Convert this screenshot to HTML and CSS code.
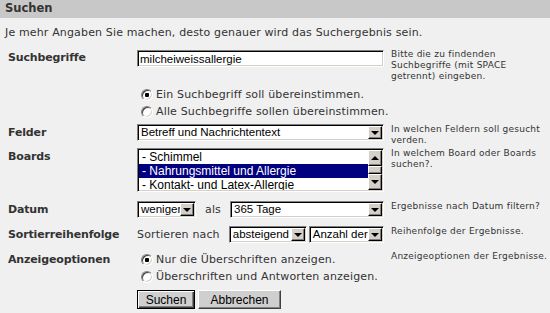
FILE: index.html
```html
<!DOCTYPE html>
<html lang="de">
  <head>
    <meta charset="UTF-8" />
    <title>Suchen</title>
    <link rel="stylesheet" href="styles.css">
  </head>
  <body>
    <div class="panel">
      <div class="panel-head">Suchen</div>
      <p class="intro">Je mehr Angaben Sie machen, desto genauer wird das Suchergebnis sein.</p>

      <div class="row row-terms">
        <div class="label">Suchbegriffe</div>
        <div class="field">
          <input type="text" class="text-input" value="milcheiweissallergie" />
        </div>
        <div class="help">Bitte die zu findenden Suchbegriffe (mit SPACE getrennt) eingeben.</div>
      </div>

      <div class="row row-tight">
        <div class="label"></div>
        <div class="field">
          <label class="radio"><input type="radio" name="match" checked />Ein Suchbegriff soll übereinstimmen.</label>
          <label class="radio"><input type="radio" name="match" />Alle Suchbegriffe sollen übereinstimmen.</label>
        </div>
        <div class="help"></div>
      </div>

      <div class="row row-tight">
        <div class="label">Felder</div>
        <div class="field">
          <div class="select">
            <span class="select-text">Betreff und Nachrichtentext</span>
            <span class="select-arrow"></span>
          </div>
        </div>
        <div class="help">In welchen Feldern soll gesucht verden.</div>
      </div>

      <div class="row row-boards">
        <div class="label">Boards</div>
        <div class="field">
          <div class="listbox">
            <div class="listbox-items">
              <div class="list-item">- Schimmel</div>
              <div class="list-item selected">- Nahrungsmittel und Allergie</div>
              <div class="list-item">- Kontakt- und Latex-Allergie</div>
            </div>
            <div class="scrollbar">
              <span class="scroll-btn up"></span>
              <span class="scroll-thumb"></span>
              <span class="scroll-btn down"></span>
            </div>
          </div>
        </div>
        <div class="help">In welchem Board oder Boards suchen?.</div>
      </div>

      <div class="row row-date">
        <div class="label">Datum</div>
        <div class="field inline">
          <div class="select select-less">
            <span class="select-text">weniger</span>
            <span class="select-arrow"></span>
          </div>
          <span class="inline-text">als</span>
          <div class="select select-grow">
            <span class="select-text">365 Tage</span>
            <span class="select-arrow"></span>
          </div>
        </div>
        <div class="help">Ergebnisse nach Datum filtern?</div>
      </div>

      <div class="row">
        <div class="label">Sortierreihenfolge</div>
        <div class="field inline">
          <span class="inline-text sort-text">Sortieren nach</span>
          <div class="select select-order">
            <span class="select-text">absteigend</span>
            <span class="select-arrow"></span>
          </div>
          <div class="select select-grow">
            <span class="select-text">Anzahl der Antworten</span>
            <span class="select-arrow"></span>
          </div>
        </div>
        <div class="help">Reihenfolge der Ergebnisse.</div>
      </div>

      <div class="row">
        <div class="label">Anzeigeoptionen</div>
        <div class="field">
          <label class="radio"><input type="radio" name="show" checked />Nur die Überschriften anzeigen.</label>
          <label class="radio"><input type="radio" name="show" />Überschriften und Antworten anzeigen.</label>
        </div>
        <div class="help">Anzeigeoptionen der Ergebnisse.</div>
      </div>

      <div class="row row-buttons">
        <div class="label"></div>
        <div class="field inline">
          <button class="btn btn-default">Suchen</button>
          <button class="btn">Abbrechen</button>
        </div>
        <div class="help"></div>
      </div>
    </div>
  </body>
</html>
```

FILE: styles.css
```css
* {
  box-sizing: border-box;
}
body {
  margin: 0;
  background-color: #f0f0f0;
  font-family: "DejaVu Sans", Verdana, sans-serif;
  font-size: 11px;
  letter-spacing: 0.15px;
  color: #333;
}
.panel-head {
  height: 18px;
  padding-left: 5px;
  background-color: #c8c8c8;
  font-weight: bold;
  font-size: 11.5px;
  letter-spacing: 0;
  line-height: 16px;
}
.intro {
  margin: 0;
  padding: 8px 5px 0;
  line-height: 14px;
}

/* rows: label | control | hint */
.row {
  display: grid;
  grid-template-columns: 129px 254px 1fr;
  align-items: start;
  padding-left: 8px;
  margin-top: 8px;
}
.row-terms {
  margin-top: 9px;
}
.row-tight {
  margin-top: 4px;
}
.row-boards {
  margin-top: 2px;
}
.row-date {
  margin-top: 9px;
}
.row-buttons {
  margin-top: 5px;
}
.label {
  font-weight: bold;
  letter-spacing: -0.15px;
  line-height: 14px;
  padding-top: 2px;
  white-space: nowrap;
}
.field {
  width: 247px;
}
.inline {
  display: flex;
  align-items: center;
}
.inline-text {
  flex-shrink: 0;
  margin: 0 9px;
  white-space: nowrap;
}
.sort-text {
  margin: 0 9px 0 0;
}
.help {
  font-size: 9px;
  letter-spacing: 0.25px;
  line-height: 11px;
}

/* sunken windows controls */
.text-input,
.select,
.listbox {
  border: 1px solid;
  border-color: #808080 #fff #fff #808080;
  box-shadow: inset 1px 1px #000, inset -1px -1px #d4d0c8;
  background-color: #fff;
  font-family: "Liberation Sans", Arial, sans-serif;
  font-size: 11.5px;
  letter-spacing: 0;
  color: #000;
}
.text-input {
  display: block;
  width: 247px;
  height: 17px;
  margin: 1px 0 0;
  padding: 0 2px;
  outline: none;
}
.select {
  display: flex;
  flex-shrink: 0;
  width: 247px;
  height: 17px;
  padding: 1px;
}
.select-text {
  flex: 1;
  min-width: 0;
  padding-left: 2px;
  line-height: 13px;
  overflow: hidden;
  white-space: nowrap;
}
.select-arrow,
.scroll-btn,
.scroll-thumb {
  display: flex;
  flex-shrink: 0;
  align-items: center;
  justify-content: center;
  width: 14px;
  background-color: #d4d0c8;
  border: 1px solid;
  border-color: #fff #000 #000 #fff;
  box-shadow: inset -1px -1px #808080;
}
.select-arrow::after,
.scroll-btn.down::after {
  content: "";
  border-left: 4px solid transparent;
  border-right: 4px solid transparent;
  border-top: 4px solid #000;
}
.scroll-btn.up::after {
  content: "";
  border-left: 4px solid transparent;
  border-right: 4px solid transparent;
  border-bottom: 4px solid #000;
}
.select-less {
  width: 59px;
}
.select-order {
  width: 78px;
  margin-right: 2px;
}
.select-grow {
  flex: 1;
  min-width: 0;
  width: auto;
}

.listbox {
  display: flex;
  width: 247px;
  height: 44px;
  padding: 1px;
  font-size: 12px;
}
.listbox-items {
  flex: 1;
  overflow: hidden;
}
.list-item {
  height: 14px;
  line-height: 14px;
  padding-left: 3px;
  white-space: nowrap;
}
.list-item.selected {
  background-color: #000080;
  color: #fff;
}
.scrollbar {
  display: flex;
  flex-direction: column;
  width: 14px;
  background-color: #e8e8e8;
}
.scroll-btn {
  height: 16px;
}
.scroll-thumb {
  height: 8px;
}

/* radios */
.radio {
  display: flex;
  align-items: center;
  height: 17px;
  white-space: nowrap;
}
.radio input {
  appearance: none;
  flex-shrink: 0;
  width: 12px;
  height: 12px;
  margin: 0 3px 0 4px;
  border-radius: 50%;
  border: 1px solid;
  border-color: #808080 #fff #fff #808080;
  box-shadow: inset 1px 1px #404040, inset -1px -1px #d4d0c8;
  background-color: #fff;
}
.radio input:checked {
  background: radial-gradient(circle, #000 0 2px, #fff 2.5px);
}

/* buttons */
.btn {
  flex-shrink: 0;
  height: 19px;
  padding: 0;
  margin: 0 3px 0 0;
  font-family: "Liberation Sans", Arial, sans-serif;
  font-size: 12px;
  color: #000;
  background-color: #cfcfcf;
  border: 1px solid;
  border-color: #fff #404040 #404040 #fff;
  box-shadow: inset -1px -1px #808080;
  width: 83px;
}
.btn-default {
  width: 58px;
  border-color: #000;
  box-shadow: inset 1px 1px #fff, inset -1px -1px #404040, inset -2px -2px #808080;
}
```
